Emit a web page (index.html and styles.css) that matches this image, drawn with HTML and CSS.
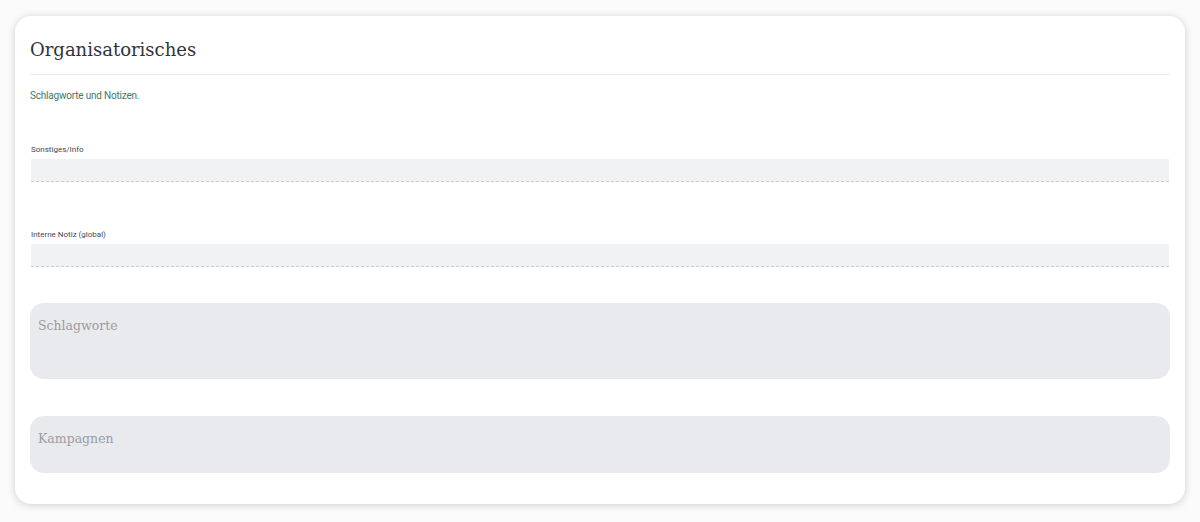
FILE: index.html
```html
<!DOCTYPE html>
<html lang="de">
<head>
    <meta charset="UTF-8">
    <title>Organisatorisches</title>
    <link rel="stylesheet" href="styles.css">
</head>
<body>
    <div class="card">
        <h2 class="card-title">Organisatorisches</h2>
        <p class="card-sub">Schlagworte und Notizen.</p>

        <div class="field">
            <label for="info">Sonstiges/Info</label>
            <input type="text" id="info">
        </div>

        <div class="field">
            <label for="note">Interne Notiz (global)</label>
            <input type="text" id="note">
        </div>

        <div class="tagbox tall">Schlagworte</div>
        <div class="tagbox">Kampagnen</div>
    </div>
</body>
</html>
```

FILE: styles.css
```css
body {
    margin: 0;
    padding: 16px 15px 18px;
    background-color: #fbfbfb;
    font-family: Roboto, "Liberation Sans", sans-serif;
}
.card {
    background: white;
    border-radius: 16px;
    box-shadow: 0 1px 8px rgba(0, 0, 0, 0.18);
    padding: 22px 15px 30px;
    box-sizing: border-box;
    height: 488px;
}
.card-title {
    margin: 0;
    padding-bottom: 12px;
    border-bottom: 1px solid #e8eaec;
    font-family: "DejaVu Serif", serif;
    font-weight: normal;
    font-size: 18px;
    line-height: 24px;
    color: #2e3440;
}
.card-sub {
    margin: 15px 0 0;
    font-size: 10px;
    color: #3d7a68;
    letter-spacing: -0.2px;
}
.field {
    margin-top: 44px;
    padding: 0 1px;
}
.field + .field {
    margin-top: 48px;
}
.field label {
    display: block;
    font-size: 8px;
    color: #444a52;
    margin-bottom: 5px;
}
.field input {
    display: block;
    width: 100%;
    box-sizing: border-box;
    height: 23px;
    border: none;
    border-bottom: 1px dashed #c8cbd0;
    background-color: #f1f2f4;
}
.tagbox {
    margin-top: 36px;
    height: 57px;
    box-sizing: border-box;
    padding: 15px 8px;
    border-radius: 14px;
    background-color: #e9eaed;
    font-family: "DejaVu Serif", serif;
    font-size: 12.5px;
    color: #9a9da2;
}
.tall {
    height: 76px;
    margin-bottom: 37px;
}
.tall + .tagbox {
    margin-top: 0;
}
```
